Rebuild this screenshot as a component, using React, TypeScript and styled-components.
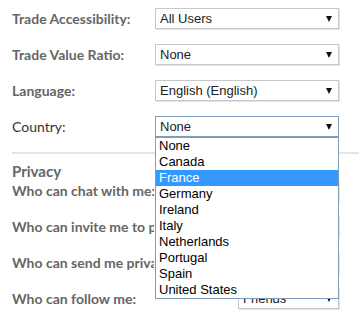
import styled, { createGlobalStyle } from "styled-components";

const GlobalStyle = createGlobalStyle`
  html, body {
    margin: 0;
    padding: 0;
    background: #fff;
  }
  body {
    font-family: Lato, "Liberation Sans", sans-serif;
    overflow: hidden;
  }
`;

const Page = styled.div`
  width: 359px;
  height: 324px;
  padding: 8px 0 0 12px;
  box-sizing: border-box;
  overflow: hidden;
`;

const Rows = styled.div`
  display: flex;
  flex-direction: column;
  gap: 15px;
  padding-right: 20px;
`;

const Row = styled.div<{ labelWidth: number; fieldWidth: number }>`
  position: relative;
  display: grid;
  grid-template-columns: ${(p) => p.labelWidth}px ${(p) => p.fieldWidth}px;
  height: 21px;
  align-items: center;
`;

// clip marks where the open country list covers the label
const Label = styled.span<{ plain?: boolean; clip?: number }>`
  font-family: Lato, sans-serif;
  font-size: 14px;
  font-weight: ${(p) => (p.plain ? 400 : 700)};
  color: ${(p) => (p.plain ? "#333" : "#666")};
  white-space: nowrap;
  overflow: hidden;
  max-width: ${(p) => (p.clip ? p.clip + "px" : "none")};
`;

const Select = styled.div<{ focused?: boolean }>`
  height: 21px;
  box-sizing: border-box;
  display: flex;
  align-items: center;
  justify-content: space-between;
  padding: 0 6px 0 4px;
  background: #fff;
  border: 1px solid ${(p) => (p.focused ? "#7f9db9" : "#c8c8c8")};
  box-shadow: ${(p) => (p.focused ? "none" : "1px 1px 0 #e4e4e4")};
  font-family: "Liberation Sans", Arial, sans-serif;
  font-size: 13px;
  color: #222;
  white-space: nowrap;
  overflow: hidden;
`;

const Arrow = styled.span`
  width: 0;
  height: 0;
  border-left: 3.5px solid transparent;
  border-right: 3.5px solid transparent;
  border-top: 6px solid #111;
  margin-top: 1px;
`;

const Divider = styled.div`
  height: 2px;
  background: #e4e4e4;
  margin-top: 15px;
`;

const Heading = styled.h3`
  margin: 8px 0 0;
  height: 18px;
  line-height: 18px;
  font-family: Lato, sans-serif;
  font-size: 15px;
  font-weight: 700;
  color: #666;
`;

const List = styled.ul`
  position: absolute;
  top: 21px;
  left: 143px;
  width: 184px;
  margin: 0;
  padding: 0;
  list-style: none;
  box-sizing: border-box;
  background: #fff;
  border: 1px solid #7f9db9;
  z-index: 2;
`;

const Option = styled.li<{ active?: boolean }>`
  height: 16px;
  line-height: 16px;
  padding-left: 3px;
  font-family: "Liberation Sans", Arial, sans-serif;
  font-size: 13px;
  color: ${(p) => (p.active ? "#fff" : "#000")};
  background: ${(p) => (p.active ? "#3399ff" : "transparent")};
`;

const countries = [
  "None",
  "Canada",
  "France",
  "Germany",
  "Ireland",
  "Italy",
  "Netherlands",
  "Portugal",
  "Spain",
  "United States",
];

const settings = [
  { label: "Trade Accessibility:", value: "All Users" },
  { label: "Trade Value Ratio:", value: "None" },
  { label: "Language:", value: "English (English)" },
];

const privacy = [
  "Who can chat with me:",
  "Who can invite me to parties:",
  "Who can send me private messages:",
  "Who can follow me:",
];

export default function App() {
  return (
    <Page>
      <GlobalStyle />
      <Rows>
        {settings.map((s) => (
          <Row key={s.label} labelWidth={143} fieldWidth={184}>
            <Label>{s.label}</Label>
            <Select>
              {s.value}
              <Arrow />
            </Select>
          </Row>
        ))}
        <Row labelWidth={143} fieldWidth={184}>
          <Label plain>Country:</Label>
          <Select focused>
            None
            <Arrow />
          </Select>
          <List>
            {countries.map((c) => (
              <Option key={c} active={c === "France"}>
                {c}
              </Option>
            ))}
          </List>
        </Row>
      </Rows>
      <Divider />
      <Heading>Privacy</Heading>
      <Rows>
        {privacy.map((p, i) => (
          <Row key={p} labelWidth={226} fieldWidth={101}>
            <Label clip={i < 3 ? 142 : undefined}>{p}</Label>
            <Select>
              Friends
              <Arrow />
            </Select>
          </Row>
        ))}
      </Rows>
    </Page>
  );
}
